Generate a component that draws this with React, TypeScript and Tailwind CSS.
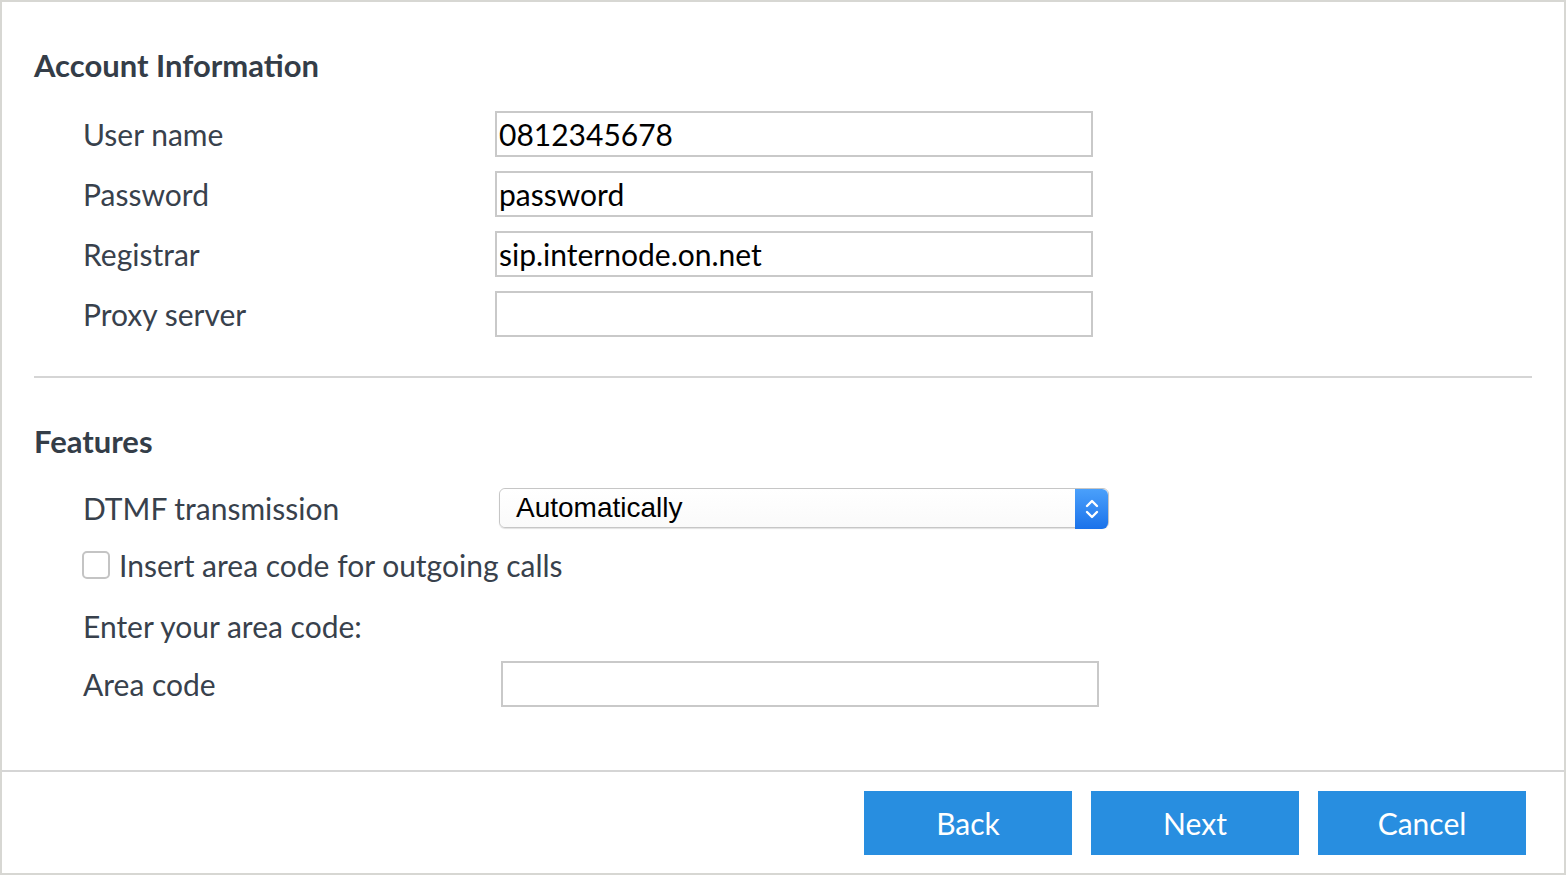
import React from "react";

const font = { fontFamily: "Lato, 'Open Sans', sans-serif" };

function Field({ label, value, inputClass = "" }: { label: string; value?: string; inputClass?: string }) {
  return (
    <div className="flex items-center h-[46px]">
      <div className="w-[412px] text-[30px] text-[#38414c] leading-none">{label}</div>
      <div
        className={`h-[46px] w-[598px] border-2 border-[#c9c9c9] bg-white flex items-center pl-[2px] text-[30px] text-black leading-none ${inputClass}`}
      >
        {value}
      </div>
    </div>
  );
}

function Stepper() {
  return (
    <div className="w-[33px] h-[40px] rounded-r-[6px] bg-gradient-to-b from-[#4aa0fb] to-[#1a72ea] flex items-center justify-center">
      <svg width="16" height="26" viewBox="0 0 16 26" fill="none" stroke="white" strokeWidth="2.4" strokeLinecap="round" strokeLinejoin="round">
        <path d="M3 10 L8 5 L13 10" />
        <path d="M3 16 L8 21 L13 16" />
      </svg>
    </div>
  );
}

export default function App() {
  return (
    <div className="w-[1566px] h-[875px] border-2 border-[#d7d7d3] bg-white flex flex-col" style={font}>
      <div className="flex-1 pl-[32px] pr-[32px]">
        <h2 className="mt-[43px] h-[40px] flex items-center text-[31px] font-bold text-[#343d48]">
          Account Information
        </h2>
        <div className="mt-[26px] pl-[49px] flex flex-col gap-[14px]">
          <Field label="User name" value="0812345678" />
          <Field label="Password" value="password" />
          <Field label="Registrar" value="sip.internode.on.net" />
          <Field label="Proxy server" />
        </div>
        <div className="mt-[39px] h-[2px] bg-[#d5d5d5]" />
        <h2 className="mt-[43px] h-[40px] flex items-center text-[31px] font-bold text-[#343d48]">
          Features
        </h2>
        <div className="mt-[27px] pl-[49px]">
          <div className="flex items-center h-[40px]">
            <div className="w-[416px] text-[30px] text-[#38414c] leading-none">DTMF transmission</div>
            <div className="w-[610px] h-[40px] flex rounded-[6px] border border-[#c6c6c6] shadow-[0_1px_1px_rgba(0,0,0,0.12)]">
              <div
                className="flex-1 flex items-center pl-[16px] text-[28px] text-black bg-gradient-to-b from-white to-[#fafafa] rounded-l-[6px]"
                style={{ fontFamily: "'Liberation Sans', Arial, sans-serif" }}
              >
                Automatically
              </div>
              <Stepper />
            </div>
          </div>
          <div className="mt-[23px] flex items-center h-[28px]">
            <div className="w-[28px] h-[28px] -ml-[1px] rounded-[5px] border-2 border-[#c4c4c4] bg-white" />
            <span className="ml-[9px] text-[30px] text-[#38414c] leading-none">Insert area code for outgoing calls</span>
          </div>
          <div className="mt-[27px] h-[40px] flex items-center text-[30px] text-[#38414c] leading-none">
            Enter your area code:
          </div>
          <div className="mt-[15px]">
            <Field label="Area code" inputClass="ml-[6px]" />
          </div>
        </div>
      </div>
      <div className="h-[2px] bg-[#d5d5d5] mb-[19px]" />
      <div className="flex justify-end gap-[19px] pr-[38px] mb-[18px]">
        {["Back", "Next", "Cancel"].map((t) => (
          <button
            key={t}
            className="w-[208px] h-[64px] bg-[#288ee0] text-white text-[30px] flex items-center justify-center"
          >
            {t}
          </button>
        ))}
      </div>
    </div>
  );
}
